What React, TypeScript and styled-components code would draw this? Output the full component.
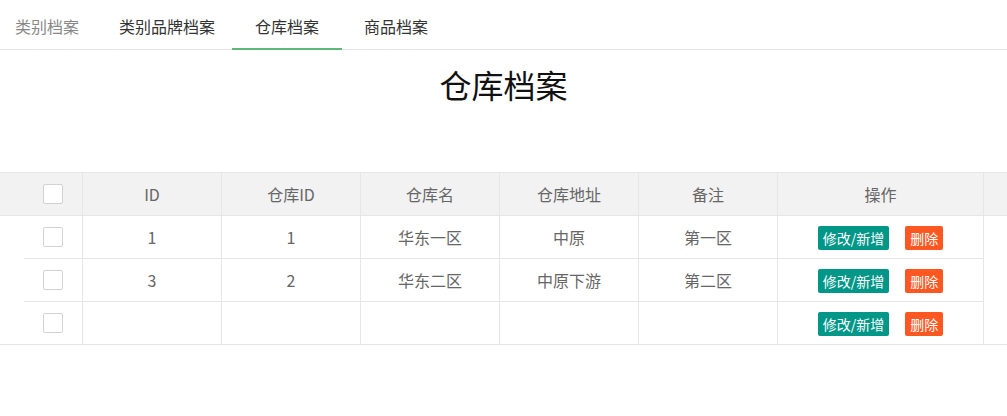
import styled, { createGlobalStyle } from "styled-components";

const GlobalStyle = createGlobalStyle`
  body {
    margin: 0;
    background: #fff;
    font-family: "Noto Sans CJK SC", "Noto Sans", sans-serif;
    color: #333;
  }
`;

type Warehouse = {
  id: string;
  warehouseId: string;
  name: string;
  address: string;
  note: string;
};

const rows: Warehouse[] = [
  { id: "1", warehouseId: "1", name: "华东一区", address: "中原", note: "第一区" },
  { id: "3", warehouseId: "2", name: "华东二区", address: "中原下游", note: "第二区" },
  { id: "", warehouseId: "", name: "", address: "", note: "" },
];

const tabs = ["类别档案", "类别品牌档案", "仓库档案", "商品档案"];
const headers = ["ID", "仓库ID", "仓库名", "仓库地址", "备注"];

export default function App() {
  return (
    <>
      <GlobalStyle />
      <TabBar>
        {tabs.map((t, i) => (
          <Tab key={t} $active={i === 2} $muted={i === 0}>
            {t}
          </Tab>
        ))}
      </TabBar>

      <Title>仓库档案</Title>

      <TableView>
        <HeaderRow>
          <CheckCell>
            <Checkbox />
          </CheckCell>
          {headers.map((h) => (
            <Cell key={h} $w={139}>
              {h}
            </Cell>
          ))}
          <Cell $w={206}>操作</Cell>
          <Gutter />
        </HeaderRow>

        <Body>
          {rows.map((r, i) => (
            <BodyRow key={i} $last={i === rows.length - 1}>
              <CheckCell $body>
                <Checkbox />
              </CheckCell>
              <Cell $w={139}>{r.id}</Cell>
              <Cell $w={139}>{r.warehouseId}</Cell>
              <Cell $w={139}>{r.name}</Cell>
              <Cell $w={139}>{r.address}</Cell>
              <Cell $w={139}>{r.note}</Cell>
              <Cell $w={206}>
                <Actions>
                  <Button $kind="edit">修改/新增</Button>
                  <Button $kind="danger">删除</Button>
                </Actions>
              </Cell>
            </BodyRow>
          ))}
        </Body>
      </TableView>
    </>
  );
}

const TabBar = styled.ul`
  display: flex;
  margin: 0;
  padding: 0;
  list-style: none;
  height: 49px;
  border-bottom: 1px solid #e2e2e2;
`;

const Tab = styled.li<{ $active?: boolean; $muted?: boolean }>`
  position: relative;
  padding: 6px 20px 0;
  height: 43px;
  line-height: 40px;
  font-size: 16px;
  color: ${(p) => (p.$muted ? "#888" : "#333")};
  white-space: nowrap;
  cursor: pointer;

  &:first-child {
    padding-left: 15px;
  }

  ${(p) =>
    p.$active &&
    `
    padding: 6px 23px 0;
    margin: 0 2px 0 -3px;
    &::after {
      content: "";
      position: absolute;
      left: 0;
      right: 0;
      bottom: -1px;
      height: 2px;
      background: #5fb878;
    }
  `}
`;

const Title = styled.h1`
  margin: 10px 0 0;
  font-size: 32px;
  font-weight: normal;
  line-height: 48px;
  text-align: center;
  color: #111;
`;

const TableView = styled.div`
  margin-top: 64px;
  border-top: 1px solid #e6e6e6;
  border-bottom: 1px solid #e6e6e6;
`;

const HeaderRow = styled.div`
  display: flex;
  height: 42px;
  background: #f2f2f2;
  border-bottom: 1px solid #e6e6e6;
`;

const Gutter = styled.div`
  flex: 1;
`;

const Body = styled.div`
  width: 984px;
`;

const BodyRow = styled.div<{ $last?: boolean }>`
  display: flex;
  height: 42px;
  margin-left: 24px;
  border-bottom: ${(p) => (p.$last ? "none" : "1px solid #e6e6e6")};
`;

const Cell = styled.div<{ $w: number }>`
  box-sizing: border-box;
  width: ${(p) => p.$w}px;
  flex: none;
  display: flex;
  align-items: center;
  justify-content: center;
  border-right: 1px solid #e6e6e6;
  font-size: 16px;
  color: #666;
`;

const CheckCell = styled.div<{ $body?: boolean }>`
  box-sizing: border-box;
  width: 83px;
  flex: none;
  display: flex;
  align-items: center;
  justify-content: center;
  padding-left: 24px;
  margin-left: ${(p) => (p.$body ? "-24px" : "0")};
  border-right: 1px solid #e6e6e6;
`;

const Checkbox = styled.span`
  box-sizing: border-box;
  width: 20px;
  height: 20px;
  border: 1px solid #d2d2d2;
  border-radius: 2px;
  background: #fff;
`;

const Actions = styled.div`
  display: flex;
  gap: 16px;
  margin-top: 2px;
`;

const Button = styled.button<{ $kind: "edit" | "danger" }>`
  height: 24px;
  padding: 0 5px;
  border: none;
  border-radius: 2px;
  font-family: inherit;
  font-size: 14px;
  line-height: 24px;
  color: #fff;
  background: ${(p) => (p.$kind === "edit" ? "#009688" : "#ff5722")};
  cursor: pointer;
`;
